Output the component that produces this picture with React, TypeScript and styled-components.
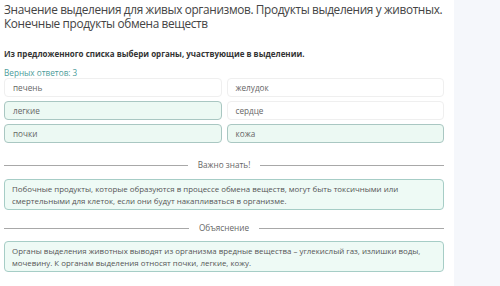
import styled, { createGlobalStyle } from "styled-components";

const GlobalStyle = createGlobalStyle`
  html, body {
    margin: 0;
    padding: 0;
    background: #ffffff;
  }
  body {
    font-family: "Open Sans", "Noto Sans", sans-serif;
  }
`;

const Page = styled.div`
  display: flex;
  flex-direction: row;
  width: 500px;
  height: 286px;
  overflow: hidden;
`;

const Main = styled.main`
  width: 454px;
  background: #fff;
  padding: 2px 10px 0 4px;
  box-sizing: border-box;
`;

const Sidebar = styled.aside`
  flex: 1;
  background: #f5f7fb;
`;

const Title = styled.h1`
  margin: 0;
  font-size: 11.8px;
  letter-spacing: -0.35px;
  line-height: 14px;
  font-weight: 400;
  color: #444;
`;

const Instruction = styled.p`
  margin: 18px 0 0 0;
  font-size: 8px;
  line-height: 12px;
  font-weight: 700;
  color: #333;
`;

const Counter = styled.div`
  margin-top: 8px;
  font-size: 8.2px;
  line-height: 10px;
  color: #4c9c9a;
`;

const Options = styled.div`
  display: grid;
  grid-template-columns: 1fr 1fr;
  column-gap: 5px;
  row-gap: 4px;
`;

const Option = styled.div<{ $selected?: boolean }>`
  height: 19px;
  box-sizing: border-box;
  display: flex;
  align-items: center;
  padding-left: 8px;
  font-size: 8.2px;
  color: #666;
  border-radius: 4px;
  border: 1px solid ${(p) => (p.$selected ? "#a9c7c2" : "#efefef")};
  background: ${(p) => (p.$selected ? "#ecf9f3" : "#fff")};
`;

const Divider = styled.div<{ $top: number }>`
  display: flex;
  align-items: center;
  gap: 10px;
  margin-top: ${(p) => p.$top}px;
  font-size: 8.2px;
  line-height: 10px;
  color: #666;

  &::before,
  &::after {
    content: "";
    flex: 1;
    height: 1px;
    background: #a8a8a8;
  }
`;

const Note = styled.div<{ $top: number }>`
  margin-top: ${(p) => p.$top}px;
  box-sizing: border-box;
  height: 31px;
  padding: 3px 7px 0 7px;
  font-size: 7.9px;
  line-height: 12px;
  color: #555;
  background: #eefaf5;
  border: 1px solid #a6cdc6;
  border-radius: 4px;
`;

const options = [
  { text: "печень", selected: false },
  { text: "желудок", selected: false },
  { text: "легкие", selected: true },
  { text: "сердце", selected: false },
  { text: "почки", selected: true },
  { text: "кожа", selected: true },
];

export default function App() {
  return (
    <>
      <GlobalStyle />
      <Page>
        <Main>
          <Title>
            Значение выделения для живых организмов. Продукты выделения у животных.
            Конечные продукты обмена веществ
          </Title>
          <Instruction>Из предложенного списка выбери органы, участвующие в выделении.</Instruction>
          <Counter>Верных ответов: 3</Counter>
          <Options>
            {options.map((o) => (
              <Option key={o.text} $selected={o.selected}>
                {o.text}
              </Option>
            ))}
          </Options>
          <Divider $top={17}>Важно знать!</Divider>
          <Note $top={9}>
            Побочные продукты, которые образуются в процессе обмена веществ, могут быть токсичными или
            смертельными для клеток, если они будут накапливаться в организме.
          </Note>
          <Divider $top={13}>Объяснение</Divider>
          <Note $top={8}>
            Органы выделения животных выводят из организма вредные вещества – углекислый газ, излишки воды,
            мочевину. К органам выделения относят почки, легкие, кожу.
          </Note>
        </Main>
        <Sidebar />
      </Page>
    </>
  );
}
